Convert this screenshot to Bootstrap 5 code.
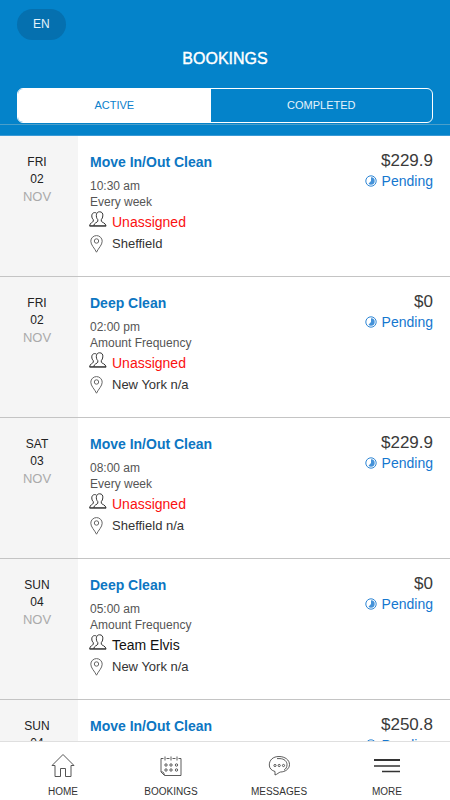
<!DOCTYPE html>
<html lang="en">
<head>
<meta charset="utf-8">
<meta name="viewport" content="width=device-width, initial-scale=1">
<title>Bookings</title>
<link href="https://cdn.jsdelivr.net/npm/bootstrap@5.3.0/dist/css/bootstrap.min.css" rel="stylesheet">
<style>
body { font-family: "Liberation Sans", Arial, sans-serif; color: #222; background: #fff; }
.app-head { background: #0483ca; padding-top: 9px; border-bottom: 1px solid #3a9ad6; }
.app-side { margin: 0 17px; }
.lang-btn { background: #0570af; color: #e6f3fb; font-size: 12px; line-height: 15px; padding: 8px 16px; border: 0; }
.app-title { font-size: 16px; line-height: 20px; margin: 9px 0 19px; -webkit-text-stroke: 0.4px #fff; }
.tab-box { border: 1px solid #fff; border-radius: 6px; overflow: hidden; margin-bottom: 1px; }
.tab-btn { border: 0; background: transparent; color: #e6f3fb; font-size: 11px; line-height: 15px; padding: 9px 0; flex: 1 1 0; }
.tab-btn.is-on { background: #fff; color: #0b80cb; flex: 0 0 46.5%; }
.head-rule { border-top: 1px solid #4b9fca; height: 11px; }
.list-area { scrollbar-width: none; min-height: 0; }
.booking { border-bottom: 1px solid #c4c4c4; }
.date-col { flex: 0 0 78px; background: #f5f5f5; font-size: 12px; line-height: 17px; padding: 18px 4px 0 0; color: #222; }
.date-col .month { font-size: 13px; color: #aaa; }
.info-col { padding: 17px 17px 22px 12px; }
.job { font-size: 14px; line-height: 18px; font-weight: 700; color: #0d76c2; }
.cost { font-size: 17px; line-height: 18px; color: #3a3a3a; margin-top: -1px; }
.when { font-size: 12px; line-height: 16px; color: #555; margin-top: 7px; }
.state { font-size: 14px; line-height: 18px; color: #1577cf; margin-top: 2px; gap: 5px; }
.who { font-size: 14px; line-height: 20px; color: #111; gap: 5px; margin-top: 2px; }
.who.none { color: #fb1010; }
.who svg { color: #333; margin: -6px 0 0 -1px; }
.place { font-size: 13px; line-height: 20px; color: #333; gap: 9px; margin-top: 2px; }
.place svg { color: #666; }
.bottom-bar { border-top: 1px solid #dfdfdf; background: #fff; padding: 10px 9px 1px; }
.bottom-bar a { color: #333; font-size: 10px; line-height: 15px; flex: 1 1 0; }
.bottom-bar svg { margin-bottom: 4px; }
svg { display: block; flex: none; fill: none; stroke: currentColor; }
</style>
<script src="https://cdn.jsdelivr.net/npm/bootstrap@5.3.0/dist/js/bootstrap.bundle.min.js"></script>
</head>
<body>
<svg width="0" height="0" class="position-absolute" aria-hidden="true">
  <symbol id="i-people" viewBox="0 0 18 17">
    <path d="M7.500 3.200C7.900 1.600 9 .8 10.600.8c2.300 0 3.500 1.500 3.200 4.100-.1 1.600-.5 2.700-1.500 3.700v1.600c.2 1.100 4.300 1.500 4.700 4.700H4.700c.2-3.200 3.800-3.400 4.100-4.700V8.600C7.600 7.500 7 5.200 7.500 3.200z"/>
    <path d="M7.300 1.900C4.600.9 2.700 2.500 2.800 5c0 1.500.5 2.700 1.500 3.700v1.500c-.3 1.200-3.400 1.400-3.700 4.700h4.100"/>
    <path d="M.6 15h16.600"/>
  </symbol>
  <symbol id="i-pin" viewBox="0 0 13 18">
    <path d="M6.500 17.200C4.500 13 .8 10 .8 6.200a5.700 5.600 0 0 1 11.400 0c0 3.800-3.700 6.800-5.700 11z"/><circle cx="6.500" cy="6" r="2.200"/>
  </symbol>
  <symbol id="i-pending" viewBox="0 0 12 12">
    <circle cx="6" cy="6" r="5.200" stroke-width=".9"/><path d="M6 2.300a3.700 3.700 0 0 1 0 7.400 4 4 0 0 1-2.500-1L6 6z" fill="currentColor" stroke="none" opacity=".8"/>
  </symbol>
</svg>
<div class="d-flex flex-column vh-100 overflow-hidden">
  <header class="app-head text-white">
    <div class="app-side">
      <button type="button" class="lang-btn rounded-pill d-block">EN</button>
      <h1 class="app-title text-center">BOOKINGS</h1>
      <div class="tab-box d-flex" role="tablist">
        <button type="button" class="tab-btn is-on" role="tab" aria-selected="true">ACTIVE</button>
        <button type="button" class="tab-btn" role="tab" aria-selected="false">COMPLETED</button>
      </div>
    </div>
    <div class="head-rule"></div>
  </header>

  <main class="list-area flex-grow-1 overflow-auto">
    <article class="booking d-flex">
      <div class="date-col text-center"><div>FRI</div><div>02</div><div class="month">NOV</div></div>
      <div class="info-col flex-grow-1">
        <div class="d-flex justify-content-between">
          <div><div class="job">Move In/Out Clean</div><div class="when">10:30 am<br>Every week</div></div>
          <div class="text-end"><div class="cost">$229.9</div><div class="state d-flex align-items-center justify-content-end"><svg width="12" height="12"><use href="#i-pending"/></svg>Pending</div></div>
        </div>
        <div class="who none d-flex align-items-center"><svg width="18" height="17"><use href="#i-people"/></svg>Unassigned</div>
        <div class="place d-flex align-items-center"><svg width="13" height="18"><use href="#i-pin"/></svg>Sheffield</div>
      </div>
    </article>
    <article class="booking d-flex">
      <div class="date-col text-center"><div>FRI</div><div>02</div><div class="month">NOV</div></div>
      <div class="info-col flex-grow-1">
        <div class="d-flex justify-content-between">
          <div><div class="job">Deep Clean</div><div class="when">02:00 pm<br>Amount Frequency</div></div>
          <div class="text-end"><div class="cost">$0</div><div class="state d-flex align-items-center justify-content-end"><svg width="12" height="12"><use href="#i-pending"/></svg>Pending</div></div>
        </div>
        <div class="who none d-flex align-items-center"><svg width="18" height="17"><use href="#i-people"/></svg>Unassigned</div>
        <div class="place d-flex align-items-center"><svg width="13" height="18"><use href="#i-pin"/></svg>New York n/a</div>
      </div>
    </article>
    <article class="booking d-flex">
      <div class="date-col text-center"><div>SAT</div><div>03</div><div class="month">NOV</div></div>
      <div class="info-col flex-grow-1">
        <div class="d-flex justify-content-between">
          <div><div class="job">Move In/Out Clean</div><div class="when">08:00 am<br>Every week</div></div>
          <div class="text-end"><div class="cost">$229.9</div><div class="state d-flex align-items-center justify-content-end"><svg width="12" height="12"><use href="#i-pending"/></svg>Pending</div></div>
        </div>
        <div class="who none d-flex align-items-center"><svg width="18" height="17"><use href="#i-people"/></svg>Unassigned</div>
        <div class="place d-flex align-items-center"><svg width="13" height="18"><use href="#i-pin"/></svg>Sheffield n/a</div>
      </div>
    </article>
    <article class="booking d-flex">
      <div class="date-col text-center"><div>SUN</div><div>04</div><div class="month">NOV</div></div>
      <div class="info-col flex-grow-1">
        <div class="d-flex justify-content-between">
          <div><div class="job">Deep Clean</div><div class="when">05:00 am<br>Amount Frequency</div></div>
          <div class="text-end"><div class="cost">$0</div><div class="state d-flex align-items-center justify-content-end"><svg width="12" height="12"><use href="#i-pending"/></svg>Pending</div></div>
        </div>
        <div class="who d-flex align-items-center"><svg width="18" height="17"><use href="#i-people"/></svg>Team Elvis</div>
        <div class="place d-flex align-items-center"><svg width="13" height="18"><use href="#i-pin"/></svg>New York n/a</div>
      </div>
    </article>
    <article class="booking d-flex">
      <div class="date-col text-center"><div>SUN</div><div>04</div></div>
      <div class="info-col flex-grow-1">
        <div class="d-flex justify-content-between">
          <div class="job">Move In/Out Clean</div>
          <div class="text-end"><div class="cost">$250.8</div><div class="state d-flex align-items-center justify-content-end"><svg width="12" height="12"><use href="#i-pending"/></svg>Pending</div></div>
        </div>
      </div>
    </article>
  </main>

  <nav class="bottom-bar d-flex text-center">
    <a href="#home" class="text-decoration-none d-flex flex-column align-items-center">
      <svg width="28" height="28" viewBox="0 0 28 28"><path d="M3 13.500 14 2.500l11 11h-3V24.500h-5.500v-8h-5v8H6v-11z" stroke="#555"/></svg>HOME</a>
    <a href="#bookings" class="text-decoration-none d-flex flex-column align-items-center">
      <svg width="28" height="28" viewBox="0 0 28 28" stroke="#777" stroke-width=".8"><path d="M6.500 6.500H4V20l3.500 3.500H24v-17h-2.500M9.500 6.500h3M15.500 6.500h3M8 4.500v4M14 4.500v4M20 4.500v4M4.500 19.500l2 1 1 2.500"/><circle cx="9" cy="13" r="1.200"/><circle cx="14" cy="13" r="1.200"/><circle cx="19.500" cy="13" r="1.200"/><circle cx="9" cy="18" r="1.200"/><circle cx="14" cy="18" r="1.200"/><circle cx="19.500" cy="18" r="1.200"/></svg>BOOKINGS</a>
    <a href="#messages" class="text-decoration-none d-flex flex-column align-items-center">
      <svg width="28" height="28" viewBox="0 0 28 28" stroke="#777" stroke-width=".8"><path d="M10 23v-3.500C6.500 18.500 4.300 16.300 4.300 13 4.300 8 8 4.500 14 4.500S24.500 8 24.500 12.500 20 20 15.500 20c-2 .5-3 2.200-5.500 3z"/><path d="M12 6.600h3c4 .2 7 2.400 7 6.200 0 2.400-1.200 4.200-3 5.400"/><circle cx="10" cy="13.500" r="1.100"/><circle cx="14.200" cy="13.500" r="1.100"/><circle cx="18.500" cy="13.500" r="1.100"/></svg>MESSAGES</a>
    <a href="#more" class="text-decoration-none d-flex flex-column align-items-center">
      <svg width="28" height="28" viewBox="0 0 28 28" stroke="#111"><path d="M1 8h26" stroke-width="2"/><path d="M1 14h26M9 19.500h18" stroke-width="1.500"/></svg>MORE</a>
  </nav>
</div>
</body>
</html>
